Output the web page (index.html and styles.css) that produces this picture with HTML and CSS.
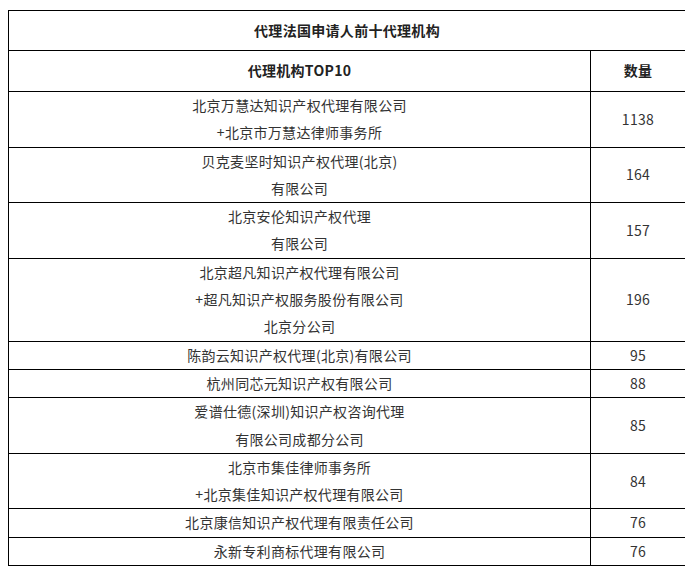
FILE: index.html
```html
<!DOCTYPE html>
<html lang="zh-CN">
<head>
<meta charset="utf-8">
<link rel="stylesheet" href="styles.css">
</head>
<body>
<div class="wrap">
<table class="tbl">
  <colgroup><col class="c1"><col class="c2"></colgroup>
  <tr><th colspan="2" class="title">代理法国申请人前十代理机构</th></tr>
  <tr><th class="head">代理机构TOP10</th><th class="head">数量</th></tr>
  <tr><td>北京万慧达知识产权代理有限公司<br>+北京市万慧达律师事务所</td><td>1138</td></tr>
  <tr><td>贝克麦坚时知识产权代理(北京)<br>有限公司</td><td>164</td></tr>
  <tr><td>北京安伦知识产权代理<br>有限公司</td><td>157</td></tr>
  <tr><td>北京超凡知识产权代理有限公司<br>+超凡知识产权服务股份有限公司<br>北京分公司</td><td>196</td></tr>
  <tr><td>陈韵云知识产权代理(北京)有限公司</td><td>95</td></tr>
  <tr><td>杭州同芯元知识产权有限公司</td><td>88</td></tr>
  <tr><td>爱谱仕德(深圳)知识产权咨询代理<br>有限公司成都分公司</td><td>85</td></tr>
  <tr><td>北京市集佳律师事务所<br>+北京集佳知识产权代理有限公司</td><td>84</td></tr>
  <tr><td>北京康信知识产权代理有限责任公司</td><td>76</td></tr>
  <tr><td>永新专利商标代理有限公司</td><td>76</td></tr>
</table>
</div>
</body>
</html>
```

FILE: styles.css
```css
body {
  margin: 8px;
  background: #fff;
  font-family: "Noto Sans CJK SC", "Microsoft YaHei", sans-serif;
  color: #333;
}
.wrap {
  padding-top: 2px;
}
.tbl {
  border-collapse: collapse;
  width: 677px;
  table-layout: fixed;
  font-size: 14px;
}
.c1 { width: 582px; }
.c2 { width: 95px; }
.tbl th, .tbl td {
  border: 1px solid #000;
  text-align: center;
  vertical-align: middle;
  line-height: 27.3px;
  padding: 0;
  letter-spacing: 0.3px;
}
.tbl th {
  font-weight: bold;
  color: #222;
}
.title {
  padding: 6px 0;
  height: 39px;
}
.head {
  height: 40px;
}
```
